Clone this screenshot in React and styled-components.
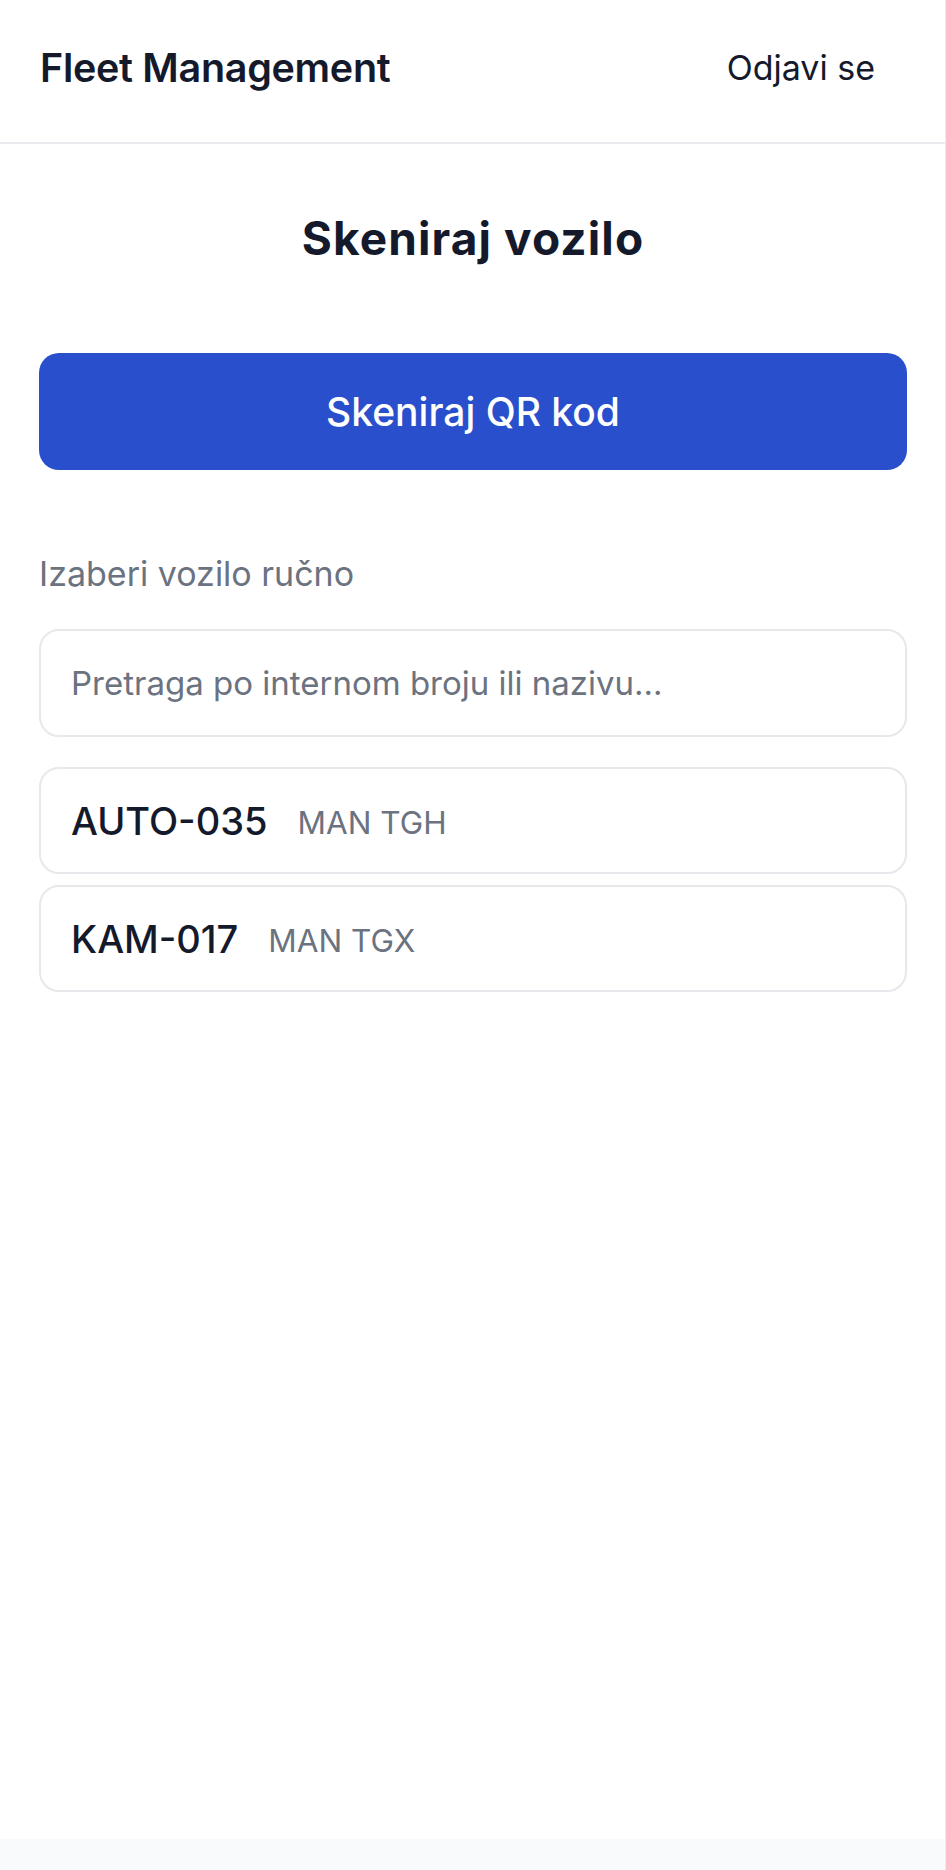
import React from 'react'
import styled, { createGlobalStyle } from 'styled-components'

const GlobalStyle = createGlobalStyle`
  * { box-sizing: border-box; }
  html, body { margin: 0; padding: 0; }
  body {
    background: #f9fafb;
    font-family: Inter, "Noto Sans", sans-serif;
    color: #141a2b;
    min-height: 1870px;
    border-right: 1px solid #dff7d9;
  }
`

const Page = styled.div`
  background: #ffffff;
  min-height: 1839px;
`

const Header = styled.header`
  height: 144px;
  padding: 0 40px 7px 40px;
  display: flex;
  align-items: center;
  justify-content: space-between;
  border-bottom: 2px solid #e9ebef;
`

const Brand = styled.div`
  font-size: 39.5px;
  font-weight: 600;
  letter-spacing: -0.3px;
`

const LogoutButton = styled.button`
  border: none;
  background: none;
  font-family: inherit;
  font-size: 34px;
  color: #141a2b;
  padding: 0 30px;
  cursor: pointer;
`

const Main = styled.main`
  padding: 0 38px 0 39px;
  display: flex;
  flex-direction: column;
`

const Title = styled.h1`
  margin: 70px 0 0;
  text-align: center;
  font-size: 46px;
  line-height: 48px;
  font-weight: 700;
  letter-spacing: 1.1px;
`

const ScanButton = styled.button`
  margin-top: 91px;
  height: 117px;
  border: none;
  border-radius: 20px;
  background: #2a4fcc;
  color: #ffffff;
  font-family: inherit;
  font-size: 39px;
  font-weight: 500;
  cursor: pointer;
`

const Label = styled.div`
  margin-top: 84px;
  font-size: 34px;
  line-height: 40px;
  color: #6b7280;
`

const Search = styled.input`
  margin-top: 35px;
  height: 108px;
  border: 2px solid #e6e8ec;
  border-radius: 20px;
  padding: 0 30px;
  font-family: inherit;
  font-size: 33px;
  color: #141a2b;
  outline: none;
  &::placeholder { color: #6b7280; }
`

const List = styled.div`
  margin-top: 30px;
  display: flex;
  flex-direction: column;
  gap: 11px;
`

const VehicleRow = styled.div`
  height: 107px;
  border: 2px solid #e6e8ec;
  border-radius: 20px;
  padding: 0 30px;
  display: flex;
  align-items: center;
  gap: 30px;
  cursor: pointer;
`

const Code = styled.span`
  font-size: 38px;
  font-weight: 500;
`

const Model = styled.span`
  font-size: 31.5px;
  color: #6b7280;
  margin-top: 4px;
`

const vehicles = [
  { code: 'AUTO-035', model: 'MAN TGH' },
  { code: 'KAM-017', model: 'MAN TGX' },
]

export default function App() {
  return (
    <>
      <GlobalStyle />
      <Page>
        <Header>
          <Brand>Fleet Management</Brand>
          <LogoutButton>Odjavi se</LogoutButton>
        </Header>
        <Main>
          <Title>Skeniraj vozilo</Title>
          <ScanButton>Skeniraj QR kod</ScanButton>
          <Label>Izaberi vozilo ručno</Label>
          <Search placeholder="Pretraga po internom broju ili nazivu..." />
          <List>
            {vehicles.map((v) => (
              <VehicleRow key={v.code}>
                <Code>{v.code}</Code>
                <Model>{v.model}</Model>
              </VehicleRow>
            ))}
          </List>
        </Main>
      </Page>
    </>
  )
}
